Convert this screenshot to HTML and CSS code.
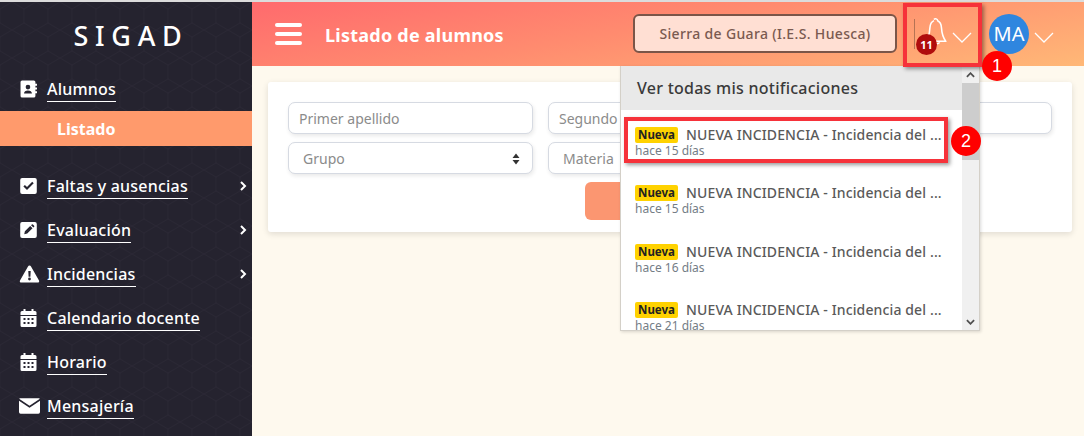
FILE: index.html
```html
<!DOCTYPE html>
<html lang="es">
<head>
<meta charset="utf-8">
<title>SIGAD</title>
<link rel="stylesheet" href="styles.css">
</head>
<body>
<div class="app">
  <aside class="sidebar">
    <div class="logo">SIGAD</div>
    <nav class="nav">
      <a class="nav-item"><svg class="ico" viewBox="0 0 16 16"><path fill="#fff" fill-rule="evenodd" d="M2 0h11a1.500 1.500 0 0 1 1.500 1.500V3H16v2h-1.500v1.500H16v2h-1.500V10H16v2h-1.500v2.500A1.500 1.500 0 0 1 13 16H2a1.500 1.500 0 0 1-1.500-1.500v-13A1.500 1.500 0 0 1 2 0zm5.500 4a2.200 2.200 0 1 0 0 4.400 2.200 2.200 0 0 0 0-4.400zM3.800 12.200h7.400c0-1.700-1.500-2.800-3.700-2.800s-3.700 1.100-3.700 2.800z"/></svg><span class="lbl">Alumnos</span></a>
      <a class="sub-item">Listado</a>
      <a class="nav-item first"><svg class="ico" viewBox="0 0 16 16"><path fill="#fff" fill-rule="evenodd" d="M2 .5h12A1.800 1.800 0 0 1 15.800 2.300v11.400A1.800 1.800 0 0 1 14 15.500H2A1.800 1.800 0 0 1 .2 13.700V2.300A1.800 1.800 0 0 1 2 .5zm4.600 11.300 6.300-6.300-1.400-1.400-4.900 4.900-2-2-1.400 1.400z"/></svg><span class="lbl">Faltas y ausencias</span><svg class="caret" viewBox="0 0 8 12"><path d="M2 2l4 4-4 4" fill="none" stroke="#fff" stroke-width="2"/></svg></a>
      <a class="nav-item"><svg class="ico" viewBox="0 0 16 16"><path fill="#fff" fill-rule="evenodd" d="M2 .5h12A1.800 1.800 0 0 1 15.800 2.300v11.400A1.800 1.800 0 0 1 14 15.500H2A1.800 1.800 0 0 1 .2 13.700V2.300A1.800 1.800 0 0 1 2 .5zM4 12l2.800-.6 5-5-2.200-2.200-5 5zM10.400 3.500l2.200 2.200.7-.7a.8.8 0 0 0 0-1.100l-1.100-1.100a.8.8 0 0 0-1.100 0z"/></svg><span class="lbl">Evaluación</span><svg class="caret" viewBox="0 0 8 12"><path d="M2 2l4 4-4 4" fill="none" stroke="#fff" stroke-width="2"/></svg></a>
      <a class="nav-item"><svg class="ico wide" viewBox="0 0 20 18"><path fill="#fff" fill-rule="evenodd" d="M10 .5c.7 0 1.200.4 1.500.9l8 14c.6 1-.1 2.100-1.300 2.100H1.800c-1.200 0-1.900-1.100-1.300-2.100l8-14c.3-.5.800-.9 1.500-.9zM8.800 6l.3 5.800h1.800l.3-5.800zM10 12.600a1.400 1.400 0 1 0 0 2.800 1.400 1.400 0 0 0 0-2.800z"/></svg><span class="lbl">Incidencias</span><svg class="caret" viewBox="0 0 8 12"><path d="M2 2l4 4-4 4" fill="none" stroke="#fff" stroke-width="2"/></svg></a>
      <a class="nav-item"><svg class="ico" viewBox="0 0 16 18"><path fill="#fff" fill-rule="evenodd" d="M3 0h2v2h6V0h2v2h1.500A1.500 1.500 0 0 1 16 3.500V6H0V3.500A1.500 1.500 0 0 1 1.500 2H3zM0 7h16v9.500a1.500 1.500 0 0 1-1.500 1.500h-13A1.500 1.500 0 0 1 0 16.500zm3 2v2h2V9zm4 0v2h2V9zm4 0v2h2V9zm-8 4v2h2v-2zm4 0v2h2v-2zm4 0v2h2v-2z"/></svg><span class="lbl">Calendario docente</span></a>
      <a class="nav-item"><svg class="ico" viewBox="0 0 16 18"><path fill="#fff" fill-rule="evenodd" d="M3 0h2v2h6V0h2v2h1.500A1.500 1.500 0 0 1 16 3.500V6H0V3.500A1.500 1.500 0 0 1 1.500 2H3zM0 7h16v9.500a1.500 1.500 0 0 1-1.500 1.500h-13A1.500 1.500 0 0 1 0 16.500zm3 2v2h2V9zm4 0v2h2V9zm4 0v2h2V9zm-8 4v2h2v-2zm4 0v2h2v-2zm4 0v2h2v-2z"/></svg><span class="lbl">Horario</span></a>
      <a class="nav-item"><svg class="ico wide" viewBox="0 0 19 14"><path fill="#fff" d="M1 0h17c.4 0 .7.200.9.500L9.500 6.800.1.500C.3.200.6 0 1 0zM0 2.200l9.500 6.300L19 2.200v10.300a1.500 1.500 0 0 1-1.500 1.500h-16A1.500 1.500 0 0 1 0 12.500z"/></svg><span class="lbl">Mensajería</span></a>
    </nav>
  </aside>
  <main class="main">
    <header class="topbar">
      <div class="burger"><i></i><i></i><i></i></div>
      <h1 class="title">Listado de alumnos</h1>
      <div class="spacer"></div>
      <div class="center-btn">Sierra de Guara (I.E.S. Huesca)</div>
      <div class="bell-wrap">
        <svg class="bell" viewBox="0 0 22 28"><path d="M9.500 2.500a2 2 0 0 1 3.600 1.200c3 1.300 3.500 4 3.700 7 .3 5 1 8.500 4.200 12.800H4.500" fill="none" stroke="#fff" stroke-width="1.500" stroke-linejoin="round"/><path d="M9.500 3.500c-3 1.300-3.700 4-3.900 7-.2 3.500-.6 6-1.600 8.500" fill="none" stroke="#fff" stroke-width="1.500"/><path d="M10 24.500a3 3 0 0 0 5 0" fill="none" stroke="#fff" stroke-width="1.500"/></svg>
        <span class="count">11</span>
        <svg class="chev" viewBox="0 0 20 12"><path d="M1 1l9 9 9-9" fill="none" stroke="#fff" stroke-width="1.300"/></svg>
      </div>
      <div class="avatar">MA</div>
      <svg class="chev last" viewBox="0 0 20 12"><path d="M1 1l9 9 9-9" fill="none" stroke="#fff" stroke-width="1.300"/></svg>
    </header>
    <section class="content">
      <div class="card">
        <div class="form-row">
          <div class="field">Primer apellido</div>
          <div class="field">Segundo apellido</div>
          <div class="field"></div>
        </div>
        <div class="form-row">
          <div class="field select">Grupo<svg class="updown" viewBox="0 0 8 12"><path d="M4 .5L7.500 5h-7zM4 11.500L.5 7h7z" fill="#333"/></svg></div>
          <div class="field select">Materia</div>
        </div>
        <div class="actions"><button class="search"></button></div>
      </div>
    </section>
  </main>

  <div class="dropdown">
    <div class="dd-body">
      <div class="dd-head">Ver todas mis notificaciones</div>
      <div class="dd-list">
        <div class="note"><div class="note-line"><span class="tag">Nueva</span><span class="note-title">NUEVA INCIDENCIA - Incidencia del ...</span></div><div class="when">hace 15 días</div></div>
        <div class="note"><div class="note-line"><span class="tag">Nueva</span><span class="note-title">NUEVA INCIDENCIA - Incidencia del ...</span></div><div class="when">hace 15 días</div></div>
        <div class="note"><div class="note-line"><span class="tag">Nueva</span><span class="note-title">NUEVA INCIDENCIA - Incidencia del ...</span></div><div class="when">hace 16 días</div></div>
        <div class="note"><div class="note-line"><span class="tag">Nueva</span><span class="note-title">NUEVA INCIDENCIA - Incidencia del ...</span></div><div class="when">hace 21 días</div></div>
      </div>
    </div>
    <div class="scroll">
      <svg class="arrow" viewBox="0 0 10 6"><path d="M1 5l4-4 4 4" fill="none" stroke="#505050" stroke-width="2"/></svg>
      <div class="thumb"></div>
      <div class="track"></div>
      <svg class="arrow" viewBox="0 0 10 6"><path d="M1 1l4 4 4-4" fill="none" stroke="#505050" stroke-width="2"/></svg>
    </div>
  </div>

  <div class="mark box-one"></div>
  <div class="mark box-two"></div>
  <div class="dot dot-one">1</div>
  <div class="dot dot-two">2</div>
</div>
</body>
</html>
```
FILE: styles.css
```css
* { box-sizing: border-box; }
html, body { margin: 0; height: 100%; }
body { font-family: "Noto Sans", "Open Sans", sans-serif; background: #fef9ee; overflow: hidden; }
.app { position: relative; display: flex; width: 1084px; height: 436px; border-top: 2px solid #dcdcdc; }

.sidebar { width: 252px; flex: none; color: #fff; background-color: #25232f; background-image: url("data:image/svg+xml,%3Csvg xmlns='http://www.w3.org/2000/svg' width='24' height='28'%3E%3Cpath d='M12 0l12 7v14l-12 7L0 21V7z' fill='none' stroke='%232a2834' stroke-width='1'/%3E%3C/svg%3E"); }
.logo { height: 65px; padding: 14px 0 0 10px; text-align: center; font-size: 27px; line-height: 40px; letter-spacing: 6.700px; font-weight: 500; }
.nav { display: flex; flex-direction: column; }
.nav-item { display: flex; align-items: center; height: 44px; padding-left: 20px; position: relative; font-size: 16px; font-weight: 500; letter-spacing: .22px; }
.nav-item.first { margin-top: 18px; }
.ico { width: 17px; height: 18px; margin-right: 10px; flex: none; }
.ico.wide { width: 21px; margin-left: -1px; margin-right: 7px; }
.lbl { border-bottom: 1px solid #fff; line-height: 22px; padding-bottom: 1px; margin-top: 2px; }
.caret { position: absolute; left: 239px; top: 16px; width: 8px; height: 12px; }
.sub-item { display: block; height: 35px; background: #ff9a6c; padding: 1px 0 0 57px; font-size: 16px; font-weight: 700; line-height: 34px; }

.main { flex: 1; display: flex; flex-direction: column; min-width: 0; }
.topbar { height: 64px; flex: none; display: flex; align-items: center; padding-left: 23px; background: linear-gradient(170deg, #ff6a6d 0%, #ff8b6f 45%, #ffb877 100%); }
.burger { width: 27px; display: flex; flex-direction: column; gap: 5px; margin-top: -1px; }
.burger i { display: block; height: 4px; background: #fff; border-radius: 2px; }
.title { margin: 1px 0 0 23px; font-size: 18px; font-weight: 700; color: #fff; letter-spacing: .24px; }
.spacer { flex: 1; }
.center-btn { width: 264px; height: 39px; margin-top: -1px; border: 2px solid #7b5548; border-radius: 6px; background: #ffdfd3; color: #7a5a50; font-size: 14px; font-weight: 500; letter-spacing: .34px; display: flex; align-items: center; justify-content: center; }
.bell-wrap { position: relative; width: 75px; height: 30px; margin-left: 17px; border-left: 1px solid rgba(120,80,60,.55); flex: none; }
.bell { position: absolute; left: 9px; top: -2px; width: 23px; height: 29px; }
.count { position: absolute; left: 1px; top: 15px; width: 21px; height: 21px; border-radius: 50%; background: #b00d0d; color: #fff; font-size: 11px; font-weight: 700; line-height: 21px; text-align: center; }
.chev { position: absolute; left: 37px; top: 13px; width: 20px; height: 12px; }
.avatar { width: 40px; height: 40px; border-radius: 50%; background: #2f86df; color: #fff; font-size: 20px; line-height: 40px; text-align: center; flex: none; }
.chev.last { position: static; margin: 8px 30px 0 5px; flex: none; }

.content { flex: 1; padding: 16px 12px 0 16px; }
.card { height: 150px; background: #fff; border-radius: 3px; box-shadow: 0 2px 6px rgba(0,0,0,.12); padding: 20px; display: flex; flex-direction: column; gap: 8px; }
.form-row { display: grid; grid-template-columns: 245px 245px 244px; gap: 15px; }
.field { position: relative; height: 32px; border: 1px solid #d6dae2; border-radius: 7px; box-shadow: 1px 2px 4px rgba(0,0,0,.09); padding: 0 10px; color: #8b8b8b; font-size: 14px; line-height: 32px; background: #fff; }
.field.select { padding-left: 14px; }
.updown { position: absolute; right: 12px; top: 10px; width: 8px; height: 12px; }
.actions { display: flex; padding-left: 297px; }
.search { width: 120px; height: 38px; border: 0; border-radius: 6px; background: #fb9671; }

.dropdown { position: absolute; left: 620px; top: 64px; width: 360px; height: 265px; display: flex; background: #fff; border: 1px solid #d4d0c8; border-top: 0; box-shadow: 1px 1px 3px rgba(0,0,0,.15); }
.dd-body { flex: 1; min-width: 0; display: flex; flex-direction: column; overflow: hidden; }
.dd-head { height: 44px; flex: none; background: #e9e9e9; padding-left: 16px; line-height: 44px; font-size: 16px; font-weight: 500; color: #3a3a3a; letter-spacing: .25px; }
.dd-list { flex: 1; overflow: hidden; padding-top: 16px; }
.note { height: 58.300px; padding-left: 14px; white-space: nowrap; }
.note-line { display: flex; align-items: center; height: 18px; }
.tag { width: 43px; height: 16px; border-radius: 2px; background: #ffd200; color: #222; font-size: 11.500px; font-weight: 700; line-height: 16px; text-align: center; flex: none; }
.note-title { margin-left: 8px; font-size: 14px; line-height: 18px; font-weight: 500; color: #5a5a5a; letter-spacing: .13px; }
.when { font-size: 12px; line-height: 13px; color: #747d86; }
.scroll { width: 17px; flex: none; background: #f0f0f0; display: flex; flex-direction: column; }
.arrow { width: 9px; height: 6px; margin: 6px auto 5px; flex: none; }
.thumb { height: 77px; background: #cdcdcd; flex: none; }
.track { flex: 1; }

.mark { position: absolute; border: 4px solid #f6323a; box-shadow: 2px 2px 4px rgba(0,0,0,.4); pointer-events: none; }
.box-one { left: 903px; top: 1px; width: 79px; height: 64px; }
.box-two { left: 624px; top: 115px; width: 324px; height: 46px; }
.dot { position: absolute; width: 30px; height: 30px; border-radius: 50%; background: #f00; color: #fff; font-family: "Liberation Sans", sans-serif; font-size: 18px; line-height: 30px; text-align: center; }
.dot-one { left: 982px; top: 49px; }
.dot-two { left: 951px; top: 124px; }
```
